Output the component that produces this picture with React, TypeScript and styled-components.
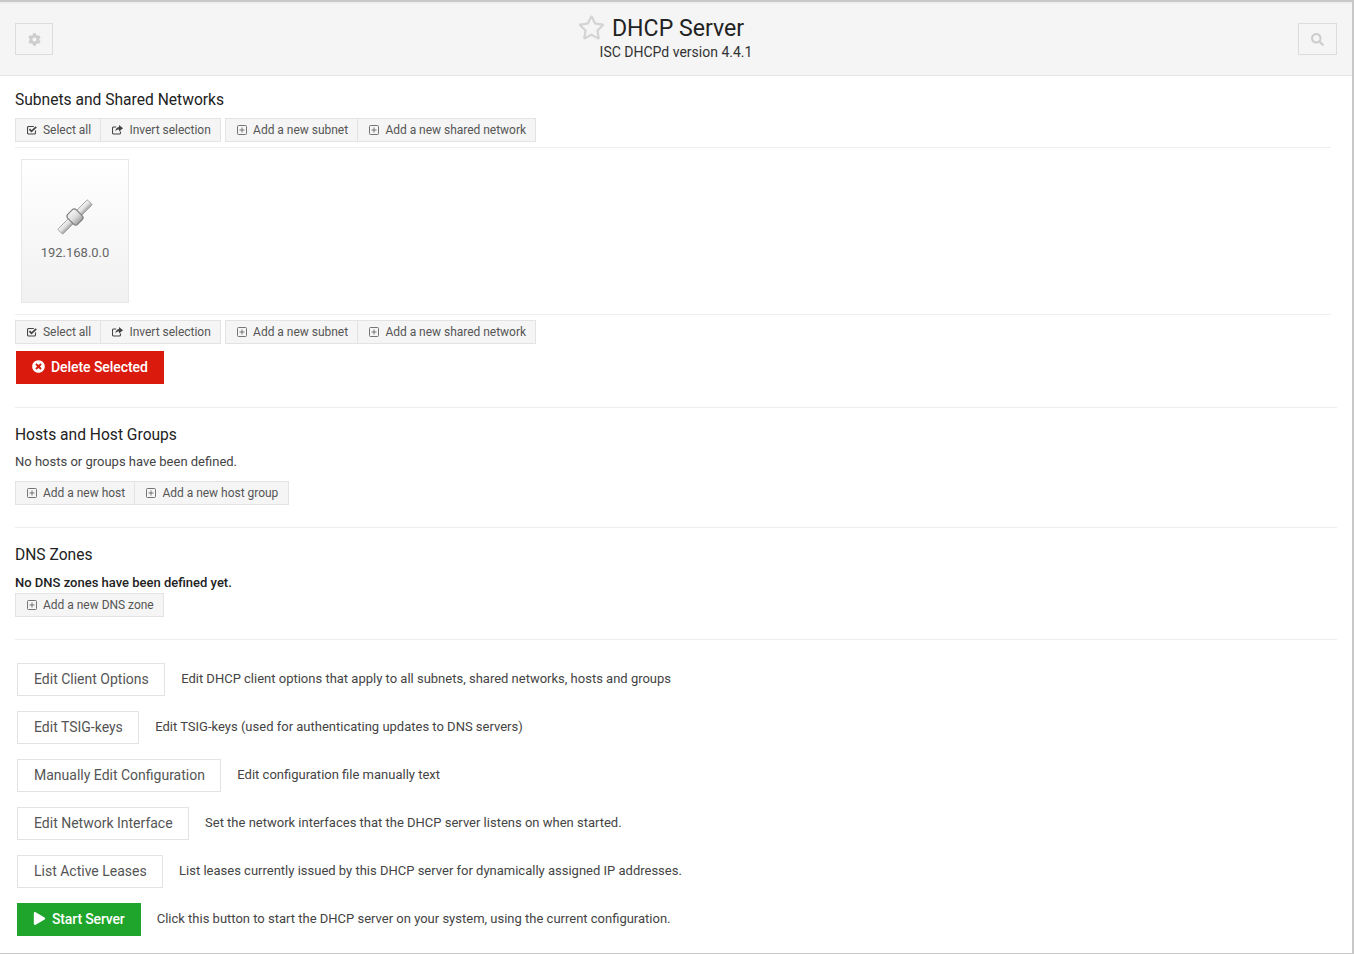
import styled, { createGlobalStyle } from "styled-components"
import type { ReactNode } from "react"
import { FaCog, FaSearch, FaTimesCircle, FaPlay, FaRegStar } from "react-icons/fa"

const GlobalStyle = createGlobalStyle`
  html, body {
    margin: 0;
    padding: 0;
    background: #fff;
  }
  body {
    font-family: Roboto, "Liberation Sans", Arial, sans-serif;
    font-size: 13px;
    color: #333;
  }
`

const Page = styled.div`
  width: 1352px;
  height: 953px;
  box-sizing: content-box;
  border-right: 2px solid #c8c8c8;
  border-bottom: 1px solid #c8c8c8;
  overflow: hidden;
`

const TopBar = styled.header`
  display: flex;
  justify-content: space-between;
  align-items: flex-start;
  box-sizing: border-box;
  height: 76px;
  padding: 21px 15px 0;
  position: relative;
  background: #f5f5f5;
  border-top: 2px solid #c9c9c9;
  border-bottom: 1px solid #e3e3e3;
  box-shadow: inset 0 2px 0 #efefef;
`

const BarButton = styled.button<{ $width: number }>`
  display: flex;
  align-items: center;
  justify-content: center;
  width: ${(p) => p.$width}px;
  height: 32px;
  padding: 0;
  background: #f5f5f5;
  border: 1px solid #dcdcdc;
  color: #cdcdcd;
  font-size: 13px;
`

const TitleBlock = styled.div`
  position: absolute;
  left: 0;
  right: 0;
  top: 13px;
  text-align: center;
`

const Title = styled.h1`
  margin: 0;
  padding-right: 30px;
  font-size: 23.1px;
  font-weight: 400;
  line-height: 28px;
  color: #222;
  display: flex;
  justify-content: center;
  align-items: center;
  gap: 7px;
  svg {
    color: #d4d4d4;
    margin-top: -3px;
  }
`

const Subtitle = styled.div`
  font-size: 14px;
  line-height: 18px;
  color: #333;
`

const Content = styled.main`
  padding: 15px 15px 0;
`

const SectionTitle = styled.h2`
  margin: 0;
  font-size: 15.6px;
  font-weight: 400;
  line-height: 18px;
  color: #222;
`

const Toolbar = styled.div<{ $top?: number }>`
  display: flex;
  gap: 4px;
  margin-top: ${(p) => p.$top ?? 0}px;
`

const ButtonGroup = styled.div`
  display: flex;
`

const LinkButton = styled.a`
  display: flex;
  align-items: center;
  box-sizing: border-box;
  height: 24px;
  padding: 0 9.3px 0 11px;
  gap: 6px;
  background: #f5f5f5;
  border: 1px solid #e3e3e3;
  font-size: 12px;
  letter-spacing: -0.02px;
  color: #555;
  white-space: nowrap;
  & + & {
    border-left: 0;
  }
`

const ThinRule = styled.hr<{ $top?: number }>`
  margin: ${(p) => p.$top ?? 0}px 0 0;
  border: 0;
  border-top: 1px solid #eeeeee;
  width: 1316px;
`

const SubnetTile = styled.div`
  display: flex;
  flex-direction: column;
  align-items: center;
  box-sizing: border-box;
  width: 108px;
  height: 144px;
  margin: 11px 0 11px 6px;
  padding-top: 39px;
  border: 1px solid #e8e8e8;
  background: linear-gradient(to bottom, #ffffff 0%, #f1f1f1 100%);
  font-size: 13px;
  color: #666;
`

const TileLabel = styled.span`
  margin-top: 10px;
  line-height: 16px;
`

const DangerButton = styled.button`
  display: flex;
  align-items: center;
  gap: 6px;
  box-sizing: border-box;
  width: 148px;
  height: 33px;
  margin: 7px 0 0 1px;
  padding: 0 0 2px 16px;
  background: #db1a0e;
  border: 0;
  color: #fff;
  font: 500 14px Roboto, sans-serif;
  letter-spacing: -0.06px;
  svg {
    font-size: 13px;
  }
`

const SectionRule = styled.hr<{ $top: number }>`
  margin: ${(p) => p.$top}px 0 0;
  border: 0;
  border-top: 1px solid #eeeeee;
`

const Section = styled.section<{ $top: number }>`
  margin-top: ${(p) => p.$top}px;
`

const Note = styled.p<{ $strong?: boolean; $top: number; $bottom: number }>`
  margin: ${(p) => p.$top}px 0 ${(p) => p.$bottom}px;
  font-size: 13px;
  line-height: 16px;
  font-weight: ${(p) => (p.$strong ? 500 : 400)};
  color: ${(p) => (p.$strong ? "#222" : "#444")};
`

const ActionList = styled.div`
  display: flex;
  flex-direction: column;
  gap: 15px;
  margin: 23px 0 0 2px;
`

const ActionRow = styled.div`
  display: flex;
  align-items: center;
  gap: 16px;
  font-size: 13px;
  color: #444;
`

const Description = styled.span`
  margin-bottom: 2px;
`

const ActionButton = styled.button`
  box-sizing: border-box;
  height: 33px;
  padding: 0 15.4px 2px 16px;
  background: #fff;
  border: 1px solid #e3e3e3;
  color: #555;
  font: 400 14px Roboto, sans-serif;
`

const StartButton = styled.button`
  display: flex;
  align-items: center;
  gap: 6px;
  box-sizing: border-box;
  height: 33px;
  padding: 0 16px 2px;
  background: #1fa52b;
  border: 0;
  color: #fff;
  font: 500 14px Roboto, sans-serif;
  letter-spacing: -0.15px;
  svg {
    font-size: 13px;
  }
`

function NetworkIcon() {
  return (
    <svg width="36" height="36" viewBox="0 0 36 36">
      <defs>
        <linearGradient id="pipe" x1="0" y1="0" x2="0" y2="1">
          <stop offset="0" stopColor="#f4f4f4" />
          <stop offset="0.5" stopColor="#dedede" />
          <stop offset="1" stopColor="#a0a0a0" />
        </linearGradient>
      </defs>
      <g transform="rotate(-45 18 18)">
        <rect x="-3" y="14.5" width="42" height="7" rx="1" fill="url(#pipe)" stroke="#979797" strokeWidth="0.8" />
        <rect x="12" y="11" width="12" height="14" rx="3" fill="url(#pipe)" stroke="#7c7c7c" strokeWidth="1.1" />
      </g>
    </svg>
  )
}

function CheckSquareIcon() {
  return (
    <svg width="10" height="10" viewBox="0 0 10 10" fill="none" stroke="#444">
      <path d="M8.5 5.5v2.2c0 .7-.5 1.3-1.2 1.3H1.8C1.1 9 .5 8.4.5 7.7V2.8c0-.7.6-1.3 1.3-1.3h5" strokeWidth="1.1" />
      <path d="M2.4 4.2l2.1 2.2L9.2 1.8" strokeWidth="1.7" />
    </svg>
  )
}

function ShareSquareIcon() {
  return (
    <svg width="11" height="10" viewBox="0 0 11 10" fill="none">
      <path d="M8.5 6.5v1.2c0 .7-.5 1.3-1.2 1.3H1.8C1.1 9 .5 8.4.5 7.7V3.3C.5 2.6 1.1 2 1.8 2h2.4" stroke="#444" strokeWidth="1.1" />
      <path d="M7 0l4 3.2L7 6.4V4.6C5.4 4.6 4.2 5 3.4 6.4 3.4 4 4.8 2 7 1.9z" fill="#444" />
    </svg>
  )
}

function PlusSquareIcon() {
  return (
    <svg width="10" height="10" viewBox="0 0 10 10" fill="none" stroke="#666" strokeWidth="0.9">
      <rect x="0.5" y="0.5" width="9" height="9" rx="1" />
      <path d="M2.5 5h5M5 2.5v5" />
    </svg>
  )
}

function ToolButton({ icon, children }: { icon: ReactNode; children: ReactNode }) {
  return (
    <LinkButton>
      {icon}
      <span>{children}</span>
    </LinkButton>
  )
}

function SubnetToolbar({ top }: { top?: number }) {
  return (
    <Toolbar $top={top}>
      <ButtonGroup>
        <ToolButton icon={<CheckSquareIcon />}>Select all</ToolButton>
        <ToolButton icon={<ShareSquareIcon />}>Invert selection</ToolButton>
      </ButtonGroup>
      <ButtonGroup>
        <ToolButton icon={<PlusSquareIcon />}>Add a new subnet</ToolButton>
        <ToolButton icon={<PlusSquareIcon />}>Add a new shared network</ToolButton>
      </ButtonGroup>
    </Toolbar>
  )
}

const actions = [
  { label: "Edit Client Options", text: "Edit DHCP client options that apply to all subnets, shared networks, hosts and groups" },
  { label: "Edit TSIG-keys", text: "Edit TSIG-keys (used for authenticating updates to DNS servers)" },
  { label: "Manually Edit Configuration", text: "Edit configuration file manually text" },
  { label: "Edit Network Interface", text: "Set the network interfaces that the DHCP server listens on when started." },
  { label: "List Active Leases", text: "List leases currently issued by this DHCP server for dynamically assigned IP addresses." },
]

export default function App() {
  return (
    <Page>
      <GlobalStyle />
      <TopBar>
        <BarButton $width={38}><FaCog /></BarButton>
        <TitleBlock>
          <Title><FaRegStar size={27} />DHCP Server</Title>
          <Subtitle>ISC DHCPd version 4.4.1</Subtitle>
        </TitleBlock>
        <BarButton $width={39}><FaSearch /></BarButton>
      </TopBar>
      <Content>
        <SectionTitle>Subnets and Shared Networks</SectionTitle>
        <SubnetToolbar top={9} />
        <ThinRule $top={5} />
        <SubnetTile>
          <NetworkIcon />
          <TileLabel>192.168.0.0</TileLabel>
        </SubnetTile>
        <ThinRule />
        <SubnetToolbar top={5} />
        <DangerButton><FaTimesCircle />Delete Selected</DangerButton>
        <SectionRule $top={23} />

        <Section $top={18}>
          <SectionTitle>Hosts and Host Groups</SectionTitle>
          <Note $top={10} $bottom={11}>No hosts or groups have been defined.</Note>
          <Toolbar>
            <ButtonGroup>
              <ToolButton icon={<PlusSquareIcon />}>Add a new host</ToolButton>
              <ToolButton icon={<PlusSquareIcon />}>Add a new host group</ToolButton>
            </ButtonGroup>
          </Toolbar>
        </Section>
        <SectionRule $top={22} />

        <Section $top={18}>
          <SectionTitle>DNS Zones</SectionTitle>
          <Note $strong $top={11} $bottom={2}>No DNS zones have been defined yet.</Note>
          <Toolbar>
            <ButtonGroup>
              <ToolButton icon={<PlusSquareIcon />}>Add a new DNS zone</ToolButton>
            </ButtonGroup>
          </Toolbar>
        </Section>
        <SectionRule $top={22} />

        <ActionList>
          {actions.map((a) => (
            <ActionRow key={a.label}>
              <ActionButton>{a.label}</ActionButton>
              <Description>{a.text}</Description>
            </ActionRow>
          ))}
          <ActionRow>
            <StartButton><FaPlay />Start Server</StartButton>
            <Description>Click this button to start the DHCP server on your system, using the current configuration.</Description>
          </ActionRow>
        </ActionList>
      </Content>
    </Page>
  )
}
